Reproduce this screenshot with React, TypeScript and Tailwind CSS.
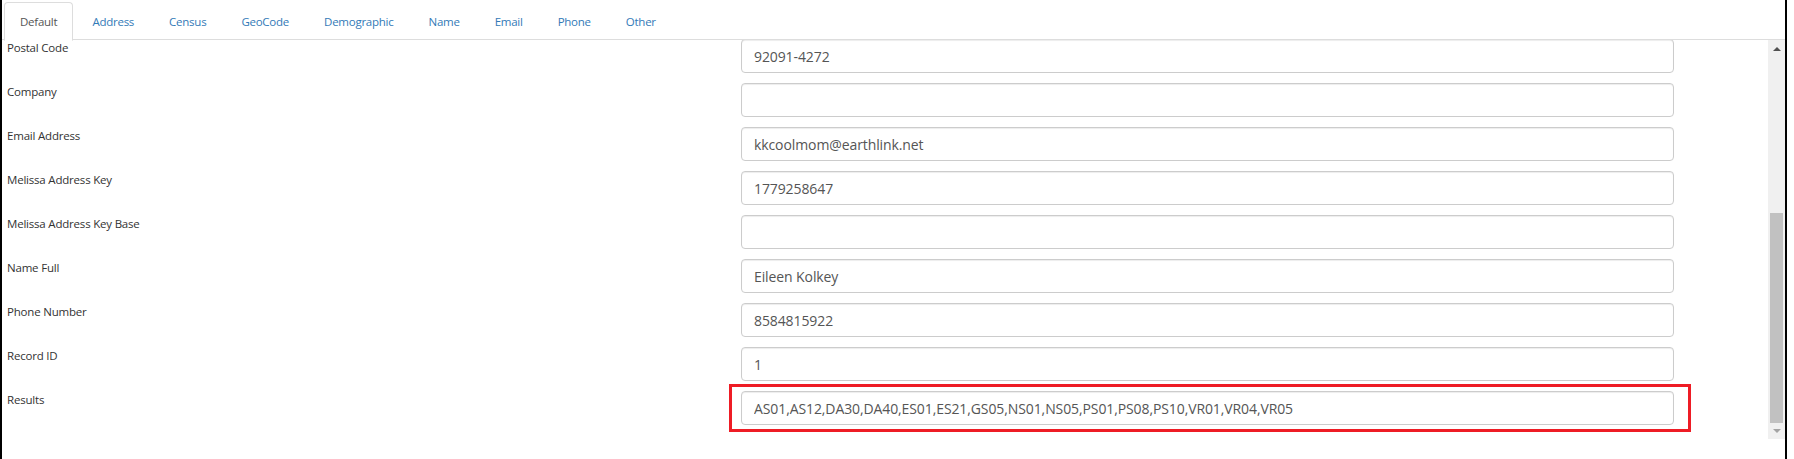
const tabs = ["Default", "Address", "Census", "GeoCode", "Demographic", "Name", "Email", "Phone", "Other"];

const fields = [
  { label: "Postal Code", value: "92091-4272" },
  { label: "Company", value: "" },
  { label: "Email Address", value: "kkcoolmom@earthlink.net" },
  { label: "Melissa Address Key", value: "1779258647" },
  { label: "Melissa Address Key Base", value: "" },
  { label: "Name Full", value: "Eileen Kolkey" },
  { label: "Phone Number", value: "8584815922" },
  { label: "Record ID", value: "1" },
  {
    label: "Results",
    value: "AS01,AS12,DA30,DA40,ES01,ES21,GS05,NS01,NS05,PS01,PS08,PS10,VR01,VR04,VR05",
    highlight: true,
  },
];

function Scrollbar() {
  return (
    <div className="flex w-[17px] shrink-0 flex-col bg-[#f0f0f0]">
      <div className="flex h-[17px] items-center justify-center">
        <div className="h-0 w-0 border-x-[4px] border-b-[4px] border-x-transparent border-b-[#505050]" />
      </div>
      <div className="flex flex-1 flex-col justify-end px-[2px]">
        <div className="h-[210px] bg-[#c1c1c1]" />
      </div>
      <div className="flex h-[16px] items-center justify-center">
        <div className="h-0 w-0 border-x-[4px] border-t-[4px] border-x-transparent border-t-[#a3a3a3]" />
      </div>
    </div>
  );
}

export default function App() {
  return (
    <div className="h-[459px] w-[1787px] border-x-2 border-black bg-white font-['Open_Sans','Noto_Sans',sans-serif]">
      <ul className="flex h-[40px] border-b border-[#ddd] pl-[2px] pt-[2px]">
        {tabs.map((tab, i) => {
          const active = i === 0;
          return (
            <li key={tab} className="-mb-px mr-[3px]">
              <span
                className={`block rounded-t-[4px] border px-[15px] py-[10px] text-[11.5px] leading-[17px] tracking-[-0.25px] ${
                  active ? "border-[#ddd] border-b-white bg-white text-[#555]" : "border-transparent text-[#337ab7]"
                }`}
              >
                {tab}
              </span>
            </li>
          );
        })}
      </ul>

      <div className="flex h-[399px]">
        <div className="flex-1 overflow-hidden">
          <div className="-mt-px flex flex-col">
            {fields.map((f) => (
              <div key={f.label} className="flex h-[44px]">
                <div className="w-[739px] shrink-0 pl-[5px] pt-px text-[11.5px] leading-[16px] tracking-[-0.2px] text-[#333]">
                  {f.label}
                </div>
                <div className="relative h-[34px] w-[933px]">
                  {f.highlight && (
                    <div className="absolute -bottom-[7px] -left-[12px] -right-[17px] -top-[7px] border-[3px] border-[#ee1c25]" />
                  )}
                  <input
                    readOnly
                    value={f.value}
                    className="relative h-[34px] w-full rounded-[4px] border border-[#ccc] bg-white px-[12px] text-[14px] tracking-[-0.1px] text-[#555] shadow-[inset_0_1px_1px_rgba(0,0,0,0.075)] outline-none"
                  />
                </div>
              </div>
            ))}
          </div>
        </div>
        <Scrollbar />
      </div>
    </div>
  );
}
